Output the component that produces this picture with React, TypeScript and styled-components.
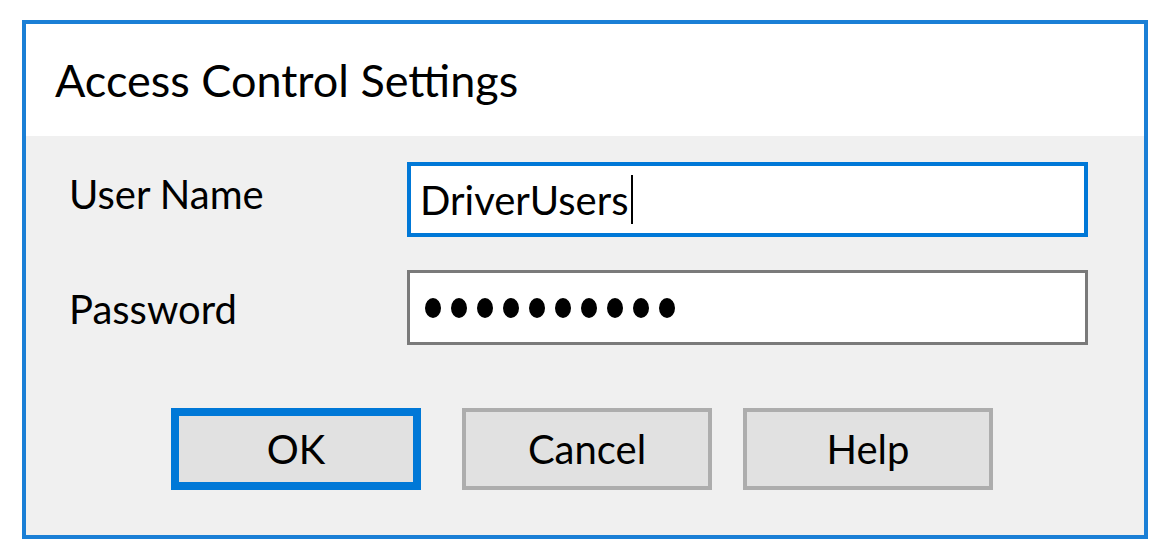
import styled, {createGlobalStyle} from 'styled-components';

const GlobalStyle = createGlobalStyle`
  html,
  body {
    background: #ffffff;
    margin: 0;
  }

  body {
    color: #000000;
    font-family: 'Segoe UI', Lato, 'Liberation Sans', sans-serif;
  }
`;

const Page = styled.div`
  padding: 20px 0 0 22px;
`;

const Dialog = styled.div`
  border: 4px solid #1a7fd6;
  box-sizing: border-box;
  display: flex;
  flex-direction: column;
  height: 519px;
  width: 1126px;
`;

const Header = styled.div`
  align-items: center;
  background: #ffffff;
  display: flex;
  flex: 0 0 112px;
  padding-left: 29px;
`;

const Title = styled.h1`
  font-size: 45px;
  font-weight: 400;
  margin: 0;
`;

const Body = styled.div`
  background: #f0f0f0;
  flex: 1;
  padding: 26px 56px 0 43px;
`;

const Form = styled.div`
  display: grid;
  grid-template-columns: 338px 1fr;
  row-gap: 33px;
`;

const Label = styled.div<{$offset: number}>`
  font-size: 40px;
  line-height: 1;
  padding-top: ${({$offset}) => $offset}px;
`;

const Field = styled.div<{$focused?: boolean}>`
  align-items: center;
  background: #ffffff;
  border: ${({$focused}) => ($focused ? '4px solid #0078d7' : '3px solid #7a7a7a')};
  box-sizing: border-box;
  display: flex;
  font-size: 40px;
  height: 75px;
  padding-left: ${({$focused}) => ($focused ? 9 : 15)}px;
`;

const Caret = styled.span`
  align-self: center;
  background: #000000;
  height: 49px;
  margin-left: 3px;
  width: 2px;
`;

const Dots = styled.div`
  display: flex;
  gap: 10px;
`;

const Dot = styled.span`
  background: #000000;
  border-radius: 50%;
  height: 20px;
  width: 16px;
`;

const ButtonRow = styled.div`
  display: flex;
  gap: 31px;
  margin-top: 63px;
  padding-left: 102px;
`;

const Button = styled.button<{$default?: boolean}>`
  background: #e1e1e1;
  border: ${({$default}) => ($default ? '8px solid #0078d7' : '4px solid #adadad')};
  box-sizing: border-box;
  color: #000000;
  font-family: inherit;
  font-size: 40px;
  height: 82px;
  margin-right: ${({$default}) => ($default ? 10 : 0)}px;
  padding: 0;
  width: 250px;
`;

const App = () => {
  return (
    <Page>
      <GlobalStyle />
      <Dialog>
        <Header>
          <Title>Access Control Settings</Title>
        </Header>
        <Body>
          <Form>
            <Label $offset={12}>User Name</Label>
            <Field $focused>
              DriverUsers
              <Caret />
            </Field>
            <Label $offset={19}>Password</Label>
            <Field>
              <Dots>
                {Array.from({length: 10}, (_, i) => (
                  <Dot key={i} />
                ))}
              </Dots>
            </Field>
          </Form>
          <ButtonRow>
            <Button $default>OK</Button>
            <Button>Cancel</Button>
            <Button>Help</Button>
          </ButtonRow>
        </Body>
      </Dialog>
    </Page>
  );
};

export default App;
